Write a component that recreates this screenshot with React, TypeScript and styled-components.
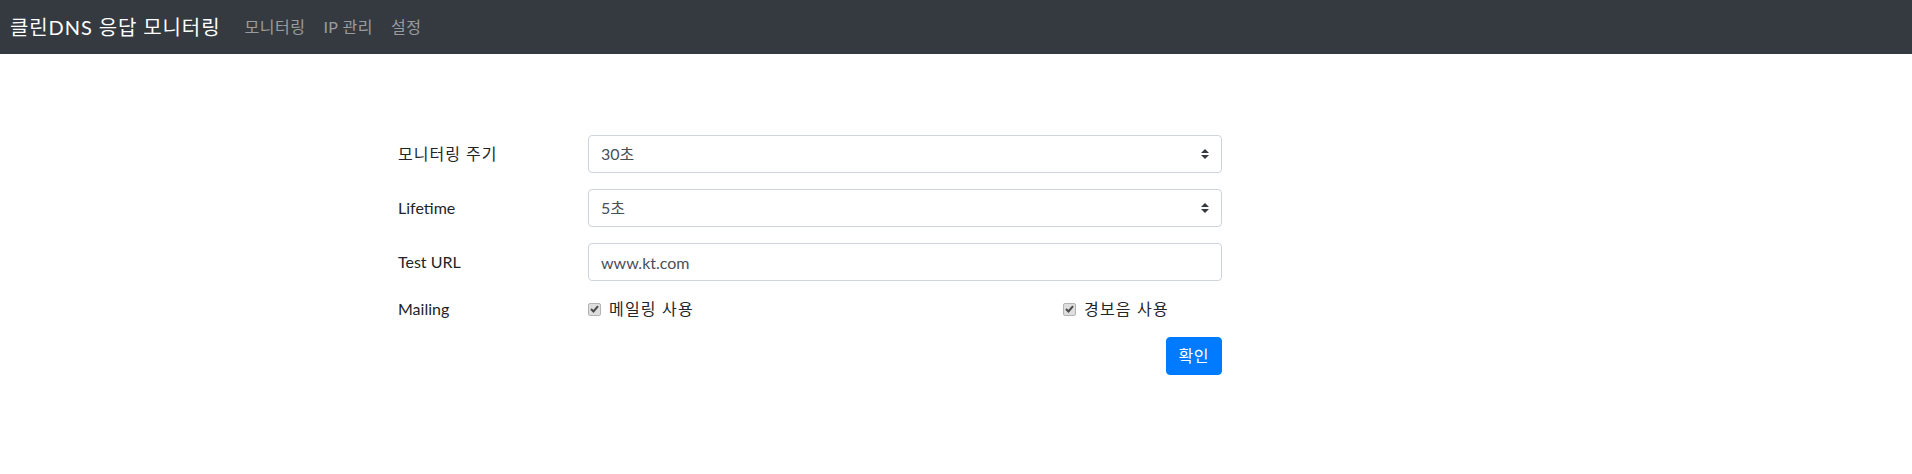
import React from 'react';
import styled, { createGlobalStyle } from 'styled-components';

const GlobalStyle = createGlobalStyle`
  body {
    margin: 0;
    background: #fff;
    color: #212529;
    font-family: Lato, "Noto Sans CJK KR", sans-serif;
    font-size: 16px;
    line-height: 1.5;
  }
  * {
    box-sizing: border-box;
  }
`;

const Navbar = styled.nav`
  display: flex;
  align-items: center;
  height: 54px;
  padding: 0 10px;
  background: #343a40;
`;

const Brand = styled.a`
  margin-right: 15px;
  color: #fff;
  font-size: 20px;
  letter-spacing: 0.9px;
  text-decoration: none;
  white-space: nowrap;
`;

const NavLink = styled.a`
  padding: 0 9px;
  color: rgba(255, 255, 255, 0.5);
  font-size: 16px;
  letter-spacing: 0.5px;
  text-decoration: none;
  white-space: nowrap;
`;

const Container = styled.main`
  width: 1140px;
  margin: 0 auto;
  padding: 81px 12px 0;
`;

const Form = styled.form`
  display: flex;
  flex-direction: column;
  gap: 16px;
  width: 824px;
`;

const Row = styled.div`
  display: grid;
  grid-template-columns: 190px 1fr;
  align-items: center;
`;

const Label = styled.label<{ $ko?: boolean }>`
  color: #212529;
  letter-spacing: ${(p) => (p.$ko ? '1px' : '0')};
`;

const SelectWrap = styled.span`
  position: relative;
  display: block;
`;

const Select = styled.select`
  display: block;
  width: 100%;
  height: 38px;
  padding: 0 28px 0 12px;
  border: 1px solid #ced4da;
  border-radius: 4px;
  background: #fff;
  color: #495057;
  font: inherit;
  appearance: none;
  outline: none;
`;

const Arrows = styled.svg`
  position: absolute;
  top: 14px;
  right: 13px;
  pointer-events: none;
`;

const Input = styled.input`
  display: block;
  width: 100%;
  height: 38px;
  padding: 0 12px;
  border: 1px solid #ced4da;
  border-radius: 4px;
  color: #495057;
  font: inherit;
  outline: none;
`;

const Checks = styled.div`
  display: grid;
  grid-template-columns: 475px 1fr;
  align-items: center;
`;

const Check = styled.label`
  display: flex;
  align-items: center;
  gap: 8px;
  color: #212529;
  letter-spacing: 1.2px;
`;

const Box = styled.span`
  display: inline-flex;
  align-items: center;
  justify-content: center;
  width: 13px;
  height: 13px;
  border: 1px solid #b4b4b4;
  border-radius: 2px;
  background: #dedede;
`;

const Actions = styled.div`
  display: flex;
  justify-content: flex-end;
`;

const Button = styled.button`
  height: 38px;
  padding: 0 12px;
  border: 1px solid #007bff;
  border-radius: 4px;
  background: #007bff;
  color: #fff;
  font: inherit;
  letter-spacing: 0.5px;
  cursor: pointer;
`;

function SelectField({ value, options }: { value: string; options: string[] }) {
  return (
    <SelectWrap>
      <Select defaultValue={value}>
        {options.map((o) => (
          <option key={o}>{o}</option>
        ))}
      </Select>
      <Arrows width="8" height="10" viewBox="0 0 8 10">
        <path d="M4 0 L8 4 H0 Z M4 10 L0 6 H8 Z" fill="#343a40" />
      </Arrows>
    </SelectWrap>
  );
}

function CheckItem({ text }: { text: string }) {
  return (
    <Check>
      <Box>
        <svg width="9" height="8" viewBox="0 0 9 8">
          <path d="M1 4 L3.5 6.5 L8 1.2" stroke="#4a4a4a" strokeWidth="2" fill="none" />
        </svg>
      </Box>
      {text}
    </Check>
  );
}

export default function App() {
  return (
    <>
      <GlobalStyle />
      <Navbar>
        <Brand href="#">클린DNS 응답 모니터링</Brand>
        <NavLink href="#">모니터링</NavLink>
        <NavLink href="#">IP 관리</NavLink>
        <NavLink href="#">설정</NavLink>
      </Navbar>
      <Container>
        <Form onSubmit={(e) => e.preventDefault()}>
          <Row>
            <Label $ko>모니터링 주기</Label>
            <SelectField value="30초" options={['10초', '30초', '60초']} />
          </Row>
          <Row>
            <Label>Lifetime</Label>
            <SelectField value="5초" options={['1초', '5초', '10초']} />
          </Row>
          <Row>
            <Label>Test URL</Label>
            <Input defaultValue="www.kt.com" />
          </Row>
          <Row>
            <Label>Mailing</Label>
            <Checks>
              <CheckItem text="메일링 사용" />
              <CheckItem text="경보음 사용" />
            </Checks>
          </Row>
          <Actions>
            <Button type="submit">확인</Button>
          </Actions>
        </Form>
      </Container>
    </>
  );
}
